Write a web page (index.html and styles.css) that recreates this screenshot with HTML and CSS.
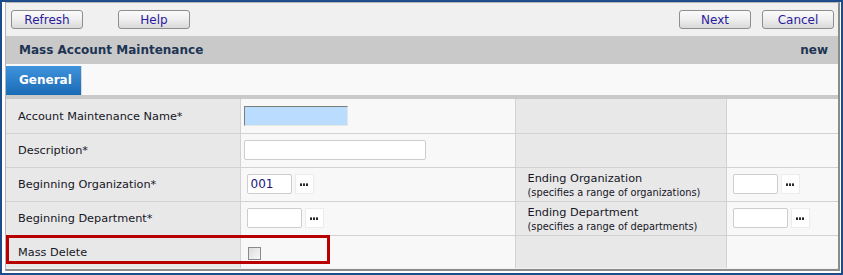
FILE: index.html
```html
<!DOCTYPE html>
<html lang="en">
<head>
    <meta charset="UTF-8">
    <title>Mass Account Maintenance</title>
    <link rel="stylesheet" href="styles.css">
</head>
<body>
    <div class="frame">
        <div class="panel">
            <div class="toolbar">
                <div class="btn-group">
                    <button class="btn">Refresh</button>
                    <button class="btn">Help</button>
                </div>
                <div class="btn-group tight">
                    <button class="btn">Next</button>
                    <button class="btn">Cancel</button>
                </div>
            </div>
            <div class="title-bar">
                <span>Mass Account Maintenance</span>
                <span>new</span>
            </div>
            <div class="tabs">
                <div class="tab active">General</div>
            </div>
            <div class="form-wrap">
                <table class="form">
                    <tr>
                        <td class="label">Account Maintenance Name*</td>
                        <td class="field"><input class="text focused w-name" type="text"></td>
                        <td class="label"></td>
                        <td class="field"></td>
                    </tr>
                    <tr>
                        <td class="label">Description*</td>
                        <td class="field"><input class="text w-desc" type="text"></td>
                        <td class="label"></td>
                        <td class="field"></td>
                    </tr>
                    <tr>
                        <td class="label">Beginning Organization*</td>
                        <td class="field"><span class="lookup"><input class="text w-org" type="text" value="001"><span class="more"><i></i><i></i><i></i></span></span></td>
                        <td class="label">Ending Organization<small>(specifies a range of organizations)</small></td>
                        <td class="field"><span class="lookup"><input class="text w-org" type="text"><span class="more"><i></i><i></i><i></i></span></span></td>
                    </tr>
                    <tr>
                        <td class="label">Beginning Department*</td>
                        <td class="field"><span class="lookup"><input class="text w-dept" type="text"><span class="more"><i></i><i></i><i></i></span></span></td>
                        <td class="label">Ending Department<small>(specifies a range of departments)</small></td>
                        <td class="field"><span class="lookup"><input class="text w-dept" type="text"><span class="more"><i></i><i></i><i></i></span></span></td>
                    </tr>
                    <tr>
                        <td class="label">Mass Delete</td>
                        <td class="field"><span class="check"></span></td>
                        <td class="label"></td>
                        <td class="field"></td>
                    </tr>
                </table>
                <div class="highlight"></div>
            </div>
        </div>
    </div>
</body>
</html>
```

FILE: styles.css
```css
body {
    margin: 0;
    font-family: 'DejaVu Sans', Verdana, sans-serif;
    font-size: 11.3px;
    color: #161626;
}
.frame {
    width: 835px;
    height: 269px;
    border: 2px solid #1c4d8a;
    background-color: #fff;
    padding: 0 1px 2px 3px;
}
.panel {
    height: 266px;
    border: 1px solid #b4b4b4;
    border-right: 2px solid #8c8c8c;
    border-bottom: 2px solid #8c8c8c;
    background-color: #f0f0f0;
}
.toolbar {
    height: 33px;
    display: flex;
    justify-content: space-between;
    align-items: flex-start;
    padding: 7px 4px 0 5px;
    box-sizing: border-box;
}
.btn-group {
    display: flex;
    gap: 35px;
}
.btn-group.tight {
    gap: 11px;
}
.btn {
    width: 72px;
    height: 19px;
    padding: 0;
    border: 1px solid #8e8e8e;
    border-radius: 3px;
    background: linear-gradient(#fbfbfb, #f0f0f0 45%, #d9d9d9);
    font-family: 'DejaVu Sans', Verdana, sans-serif;
    font-size: 12px;
    color: #2a1b9e;
    line-height: 16px;
}
.title-bar {
    height: 28px;
    background-color: #c9c9c9;
    display: flex;
    justify-content: space-between;
    align-items: center;
    padding: 0 10px 0 13px;
    font-weight: bold;
    font-size: 12px;
    color: #1d3553;
}
.tabs {
    height: 35px;
    background-color: #f9f9f9;
    padding-top: 2px;
    box-sizing: border-box;
    border-bottom: 4px solid #c9c9c9;
}
.tab {
    width: 76px;
    height: 29px;
    box-sizing: border-box;
    padding-left: 13px;
    line-height: 29px;
    font-weight: bold;
    font-size: 12px;
    color: #fff;
}
.tab.active {
    background: linear-gradient(#3f92dc, #1a6bb6);
    border-right: 1px solid #d8d8d8;
}
.form-wrap {
    position: relative;
}
.form {
    width: 100%;
    border-collapse: collapse;
    table-layout: fixed;
}
.form td {
    height: 34px;
    padding: 0;
    border: 1px solid #d2d2d2;
    box-sizing: border-box;
    vertical-align: middle;
}
.form tr:first-child td {
    border-top: 0;
}
.form tr td:first-child {
    border-left: 0;
}
.form tr td:last-child {
    border-right: 0;
}
.form tr:last-child td {
    border-bottom: 0;
    height: 33px;
}
.form td:nth-child(1) { width: 234px; }
.form td:nth-child(2) { width: 275px; }
.form td:nth-child(3) { width: 211px; }
.label {
    background-color: #e8e8e8;
    padding: 2px 0 0 12px !important;
    line-height: 14px;
}
.label small {
    display: block;
    font-size: 9.8px;
    line-height: 13px;
}
.field {
    background-color: #f8f8f8;
    padding-left: 3px !important;
}
.text {
    height: 20px;
    box-sizing: border-box;
    border: 1px solid #cdcdcd;
    border-radius: 2px;
    background-color: #fff;
    padding: 0 3px;
    font-family: 'DejaVu Sans', Verdana, sans-serif;
    font-size: 12px;
    color: #22157a;
    vertical-align: middle;
}
.text.focused {
    border-color: #7c7c7c #e6e6e6 #e6e6e6 #7c7c7c;
    border-radius: 0;
    background-color: #badcff;
}
.w-name { width: 104px; }
.w-desc { width: 182px; }
.w-org { width: 45px; }
.w-dept { width: 55px; }
.lookup {
    display: inline-flex;
    align-items: center;
    gap: 3px;
    margin-left: 3px;
}
.more {
    width: 19px;
    height: 20px;
    box-sizing: border-box;
    border: 1px solid #ececec;
    background-color: #fff;
    display: inline-flex;
    align-items: center;
    justify-content: center;
    gap: 1px;
}
.more i {
    width: 2px;
    height: 2px;
    background-color: #2a2a2a;
    border-top: 1px solid #777;
}
.check {
    display: inline-block;
    width: 13px;
    height: 13px;
    box-sizing: border-box;
    margin: 3px 0 0 4px;
    vertical-align: middle;
    border: 1px solid #8a8a8a;
    background: linear-gradient(135deg, #dcdcdc, #f8f8f8);
}
.highlight {
    position: absolute;
    left: 0;
    bottom: 4px;
    width: 324px;
    height: 29px;
    border: 3px solid #b80000;
    box-sizing: border-box;
    pointer-events: none;
}
```
